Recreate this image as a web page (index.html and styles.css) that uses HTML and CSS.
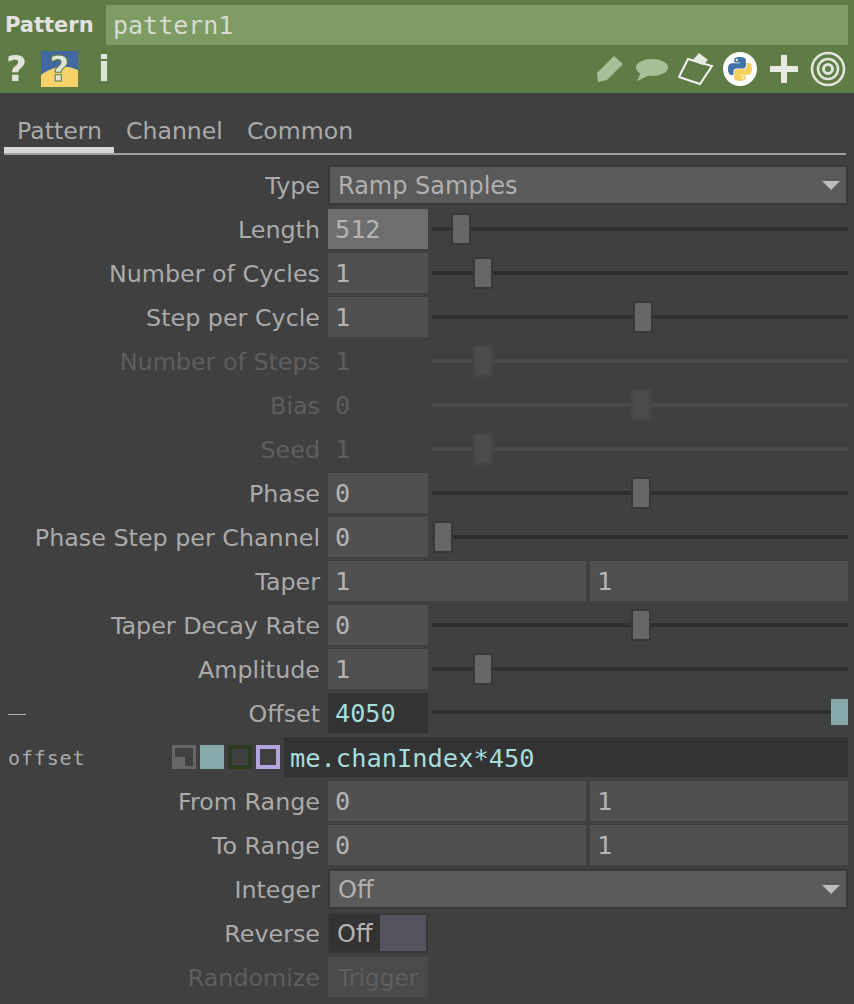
FILE: index.html
```html
<!DOCTYPE html>
<html lang="en">
<head>
	<meta charset="UTF-8">
	<title>Pattern</title>
	<link rel="stylesheet" href="styles.css">
</head>
<body>
	<div class="head">
		<div class="name_row">
			<span class="op_type">Pattern</span>
			<div class="op_name">pattern1</div>
		</div>
		<div class="icon_row">
			<span class="glyph help">?</span>
			<span class="py_help">
				<svg class="py_bg" width="37" height="36" viewBox="0 0 37 36"><path d="M0 0H37V36H0Z" fill="#f6d36a"/><path d="M0 0H37V19C30 16 25 15 19 16C11 17 5 20 0 24Z" fill="#41699f"/></svg>
				<span class="glyph">?</span>
			</span>
			<span class="glyph info">i</span>
			<div class="icon_space"></div>
			<svg class="ic ic_pen" width="26" height="26" viewBox="0 0 26 26"><path d="M0 17 L17 0 L26 8 L10 24 L1 26 Z" fill="#a9bf97"/></svg>
			<svg class="ic ic_talk" width="33" height="23" viewBox="0 0 33 23"><ellipse cx="17" cy="9.5" rx="16" ry="8.5" fill="#a9bf97"/><path d="M6 14 L2 23 L15 17 Z" fill="#a9bf97"/></svg>
			<svg class="ic ic_clip" width="36" height="34" viewBox="0 0 36 34"><path d="M1 25 L10 7 L34 14 L22 32 Z" fill="none" stroke="#f2f2f2" stroke-width="2"/><path d="M14 9 L21 1 L30 8 L25 13 Z" fill="#e8ebe4"/></svg>
			<svg class="ic ic_py" width="34" height="34" viewBox="0 0 34 34">
				<circle cx="17" cy="17" r="17" fill="#fff"/>
				<g transform="translate(5 5) scale(.218)">
					<path fill="#4273a8" d="M54.9 0C26.9 0 28.6 12.1 28.6 12.1l0 12.6h26.7v3.8H18C18 28.5 0 26.4 0 54.8c0 28.4 15.7 27.4 15.7 27.4h9.4V69c0 0-.5-15.7 15.4-15.7h26.6c0 0 14.9.2 14.9-14.4V14.7C82 14.7 84.3 0 54.9 0zM40.1 8.5c2.7 0 4.8 2.2 4.8 4.8 0 2.7-2.2 4.8-4.8 4.8-2.7 0-4.8-2.2-4.8-4.8C35.3 10.6 37.5 8.5 40.1 8.5z"/>
					<path fill="#f5cf5f" transform="rotate(180 55 55)" d="M54.9 0C26.9 0 28.6 12.1 28.6 12.1l0 12.6h26.7v3.8H18C18 28.5 0 26.4 0 54.8c0 28.4 15.7 27.4 15.7 27.4h9.4V69c0 0-.5-15.7 15.4-15.7h26.6c0 0 14.9.2 14.9-14.4V14.7C82 14.7 84.3 0 54.9 0zM40.1 8.5c2.7 0 4.8 2.2 4.8 4.8 0 2.7-2.2 4.8-4.8 4.8-2.7 0-4.8-2.2-4.8-4.8C35.3 10.6 37.5 8.5 40.1 8.5z"/>
				</g>
			</svg>
			<svg class="ic ic_plus" width="28" height="28" viewBox="0 0 28 28"><path d="M11 0 H17 V11 H28 V17 H17 V28 H11 V17 H0 V11 H11 Z" fill="#e6e9e2"/></svg>
			<svg class="ic ic_target" width="36" height="36" viewBox="0 0 36 36"><g fill="none" stroke="#dfe5da"><circle cx="18" cy="18" r="16" stroke-width="2.6"/><circle cx="18" cy="18" r="10" stroke-width="2.6"/><circle cx="18" cy="18" r="4.5" stroke-width="3"/></g></svg>
		</div>
	</div>

	<ul class="tabs">
		<li class="active">Pattern</li>
		<li>Channel</li>
		<li>Common</li>
	</ul>

	<div class="params">
		<div class="row">
			<label>Type</label>
			<div class="menu">Ramp Samples<i class="arrow"></i></div>
		</div>
		<div class="row">
			<label>Length</label>
			<div class="val hover">512</div>
			<div class="slider"><b style="left:19px"></b></div>
		</div>
		<div class="row">
			<label>Number of Cycles</label>
			<div class="val">1</div>
			<div class="slider"><b style="left:41px"></b></div>
		</div>
		<div class="row">
			<label>Step per Cycle</label>
			<div class="val">1</div>
			<div class="slider"><b style="left:201px"></b></div>
		</div>
		<div class="row off">
			<label>Number of Steps</label>
			<div class="val">1</div>
			<div class="slider"><b style="left:41px"></b></div>
		</div>
		<div class="row off">
			<label>Bias</label>
			<div class="val">0</div>
			<div class="slider"><b style="left:199px"></b></div>
		</div>
		<div class="row off">
			<label>Seed</label>
			<div class="val">1</div>
			<div class="slider"><b style="left:41px"></b></div>
		</div>
		<div class="row">
			<label>Phase</label>
			<div class="val">0</div>
			<div class="slider"><b style="left:199px"></b></div>
		</div>
		<div class="row">
			<label>Phase Step per Channel</label>
			<div class="val">0</div>
			<div class="slider"><b style="left:1px"></b></div>
		</div>
		<div class="row">
			<label>Taper</label>
			<div class="pair"><div class="val">1</div><div class="val">1</div></div>
		</div>
		<div class="row">
			<label>Taper Decay Rate</label>
			<div class="val">0</div>
			<div class="slider"><b style="left:199px"></b></div>
		</div>
		<div class="row">
			<label>Amplitude</label>
			<div class="val">1</div>
			<div class="slider"><b style="left:41px"></b></div>
		</div>
		<div class="row live">
			<label><span class="dash"></span>Offset</label>
			<div class="val">4050</div>
			<div class="slider"><b style="left:399px"></b></div>
		</div>
		<div class="expr_row">
			<span class="par_name">offset</span>
			<div class="modes">
				<i class="mode m_const"><i></i></i>
				<i class="mode m_expr"></i>
				<i class="mode m_export"></i>
				<i class="mode m_bind"></i>
			</div>
			<div class="expr">me.chanIndex*450</div>
		</div>
		<div class="row">
			<label>From Range</label>
			<div class="pair"><div class="val">0</div><div class="val">1</div></div>
		</div>
		<div class="row">
			<label>To Range</label>
			<div class="pair"><div class="val">0</div><div class="val">1</div></div>
		</div>
		<div class="row">
			<label>Integer</label>
			<div class="menu">Off<i class="arrow"></i></div>
		</div>
		<div class="row">
			<label>Reverse</label>
			<div class="toggle"><span>Off</span></div>
		</div>
		<div class="row off">
			<label>Randomize</label>
			<div class="trigger">Trigger</div>
		</div>
	</div>
</body>
</html>
```

FILE: styles.css
```css
*{
	margin:0;
	padding:0;
	box-sizing:border-box;
	list-style:none;
}
body{
	background:#404040;
	color:#aaa;
	font-family:"DejaVu Sans",sans-serif;
	font-size:23.7px;
	overflow:hidden;
}

/* green header */
.head{
	height:93px;
	background:#5f7c47;
	padding:5px 6px 0 5px;
}
.name_row{
	display:flex;
	align-items:center;
	height:40px;
}
.op_type{
	width:101px;
	font-size:21px;
	font-weight:bold;
	color:#e2e2e2;
}
.op_name{
	flex:1;
	height:40px;
	line-height:41px;
	padding-left:7px;
	background:#7d9b63;
	color:#d6dccf;
	font-family:"DejaVu Sans Mono",monospace;
	font-size:25px;
}
.icon_row{
	display:flex;
	align-items:center;
	height:46px;
	padding:2px 2px 0 0;
}
.glyph{
	font-weight:bold;
	color:#dfe5da;
	filter:blur(.5px);
}
.help{
	width:36px;
	padding-left:1px;
	font-size:36px;
	line-height:36px;
}
.py_help{
	position:relative;
	width:37px;
	height:36px;
	line-height:36px;
	text-align:center;
	font-size:35px;
}
.py_bg{
	position:absolute;
	left:0;
	top:0;
}
.py_help .glyph{
	position:relative;
	-webkit-text-stroke:1px #5f7c47;
}
.info{
	margin-left:20px;
	font-size:35px;
	line-height:36px;
}
.icon_space{
	flex:1;
}
.ic{
	display:block;
	flex:none;
	filter:blur(.5px);
}
.ic_pen{
	margin-right:12px;
}
.ic_talk{
	margin-right:10px;
}
.ic_clip{
	margin-right:9px;
}
.ic_py{
	margin-right:13px;
	filter:none;
}
.ic_plus{
	margin-right:12px;
}

/* tabs */
.tabs{
	display:flex;
	height:62px;
	margin:0 8px 0 4px;
	padding-top:22px;
	border-bottom:2px solid #a0a0a0;
	font-size:23.6px;
}
.tabs li{
	height:38px;
	padding:0 12px;
	line-height:32px;
}
.tabs li.active{
	width:110px;
	padding-left:13px;
	border-bottom:6px solid #d6d6d6;
}

/* parameter rows */
.params{
	padding-top:10px;
}
.row,.expr_row{
	display:flex;
	height:40px;
	margin-bottom:4px;
	padding-right:6px;
}
.row label{
	display:flex;
	justify-content:flex-end;
	align-items:center;
	width:320px;
	margin-right:8px;
	padding-top:1px;
	flex:none;
	white-space:nowrap;
	font-size:23.8px;
}
.val{
	width:100px;
	height:40px;
	line-height:41px;
	padding-left:7px;
	flex:none;
	background:#505050;
	color:#b4b4b4;
	font-family:"DejaVu Sans Mono",monospace;
	font-size:25.2px;
}
.val.hover{
	background:#6e6e6e;
}
.pair{
	display:grid;
	grid-template-columns:1fr 1fr;
	gap:4px;
	flex:1;
}
.pair .val{
	width:auto;
}

.slider{
	position:relative;
	flex:1;
	margin-left:4px;
}
.slider:before{
	content:"";
	position:absolute;
	left:0;
	right:0;
	top:18px;
	height:4px;
	background:#2e2e2e;
}
.slider b{
	position:absolute;
	top:4px;
	width:20px;
	height:32px;
	background:#666;
	border:2px solid #383838;
}

.menu{
	position:relative;
	flex:1;
	height:40px;
	line-height:38px;
	padding-left:8px;
	background:#5a5a5a;
	border:2px solid #383838;
	color:#b0b0b0;
	font-size:24px;
}
.arrow{
	position:absolute;
	right:6px;
	top:14px;
	border-left:9px solid transparent;
	border-right:9px solid transparent;
	border-top:9px solid #bdbdbd;
}

/* disabled */
.off label{
	color:#5e5e5e;
}
.off .val{
	background:none;
	color:#5e5e5e;
}
.off .slider:before{
	background:#4a4a4a;
}
.off .slider b{
	background:#4b4b4b;
	border-color:#454545;
}

/* offset, driven by expression */
.row.live label{
	justify-content:space-between;
	padding-left:8px;
}
.dash{
	width:18px;
	height:1px;
	margin-top:2px;
	background:#b2b2b2;
}
.live .val{
	background:#333;
	color:#a6dcdc;
}
.live .slider:before{
	top:17px;
}
.live .slider b{
	top:6px;
	width:17px;
	height:26px;
	background:#86aaa9;
	border:0;
}
.expr_row{
	align-items:center;
	padding-left:8px;
}
.par_name{
	width:164px;
	padding-top:2px;
	font-family:"DejaVu Sans Mono",monospace;
	font-size:20px;
	letter-spacing:.85px;
}
.modes{
	display:flex;
	gap:4px;
	width:112px;
}
.mode{
	display:block;
	width:24px;
	height:24px;
}
.m_const{
	position:relative;
	border:3px solid #666;
	background:#404040;
}
.m_const i{
	position:absolute;
	left:0;
	bottom:0;
	width:10px;
	height:9px;
	background:#666;
}
.m_expr{
	background:#86aaa9;
}
.m_export{
	border:4px solid #2e3a22;
}
.m_bind{
	border:4px solid #b3a6e0;
}
.expr{
	flex:1;
	height:40px;
	line-height:42px;
	padding-left:6px;
	background:#333;
	color:#a6dcdc;
	font-family:"DejaVu Sans Mono",monospace;
	font-size:25.4px;
}

.toggle{
	display:flex;
	width:100px;
	height:40px;
	background:#54545c;
	border:2px solid #383838;
}
.toggle span{
	width:50px;
	line-height:38px;
	padding-left:7px;
	background:#333;
	color:#b4b4b4;
	font-size:24px;
}
.trigger{
	width:100px;
	height:40px;
	line-height:41px;
	padding-left:10px;
	background:#4a4a4a;
	color:#5f5f5f;
	font-size:23.3px;
}
```
